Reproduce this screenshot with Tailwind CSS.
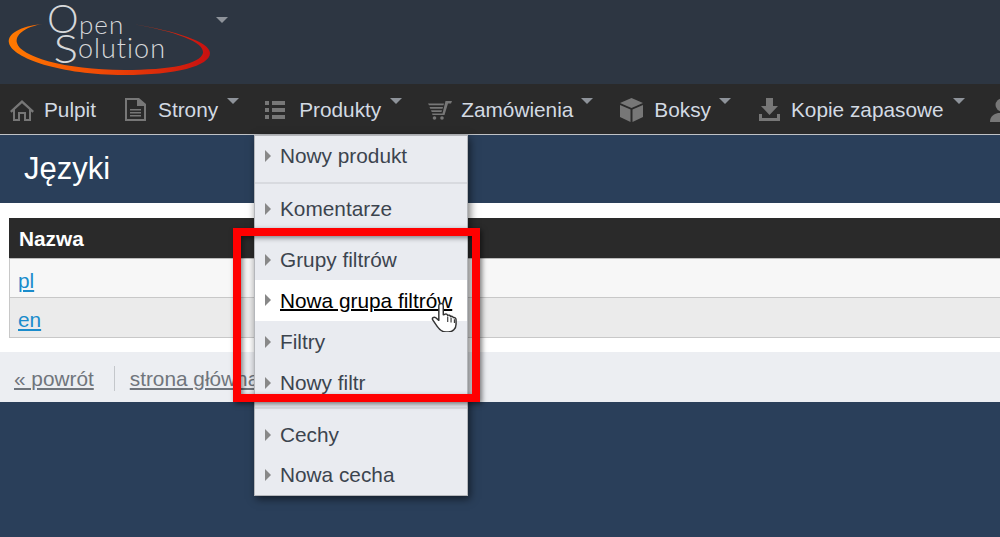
<!DOCTYPE html>
<html lang="pl">
<head>
<meta charset="utf-8">
<script src="https://cdn.jsdelivr.net/npm/@tailwindcss/browser@4"></script>
<title>Języki</title>
</head>
<body class="w-[1000px] h-[537px] overflow-hidden bg-[#2a3f5a] font-['Liberation_Sans',Arial,sans-serif] text-[20.8px] relative">

<header class="h-[84px] bg-[#2d3642] relative">
  <svg class="absolute left-[6px] top-[20px]" width="208" height="58" viewBox="0 0 208 58" fill="none">
    <defs><linearGradient id="g" x1="0" x2="1" y1="0" y2="0"><stop offset="0" stop-color="#ff7a00"/><stop offset=".45" stop-color="#f04a05"/><stop offset="1" stop-color="#c81010"/></linearGradient></defs>
    <path d="M37 4C14 6 1 14 3 23C6 38 55 55 118 55C170 55 204 46 204 33C204 22 170 11 126 4C168 11 199 22 197 33C194 44 165 50 118 50C58 50 14 36 11 23C9 15 18 7 37 4Z" fill="url(#g)"/>
  </svg>
  <span class="absolute left-[47px] top-[1px] text-[40px] leading-[34px] font-['Lato'] font-light text-[#d6d8da]">O</span>
  <span class="absolute left-[79px] top-[9px] text-[26px] leading-[30px] tracking-[1px] font-['Lato'] font-light text-[#d6d8da]">pen</span>
  <span class="absolute left-[55px] top-[28px] text-[40px] leading-[40px] scale-x-[1.15] font-['Lato'] font-light text-[#d6d8da]">S</span>
  <span class="absolute left-[78px] top-[33px] text-[27px] leading-[30px] tracking-[1px] font-['Lato'] font-light text-[#d6d8da]">olution</span>
  <span class="absolute left-[216px] top-[17px] w-0 h-0 border-x-[6px] border-x-transparent border-t-[6px] border-t-[#8e939a]"></span>
</header>

<nav class="h-[51px] bg-[#2a2a2a] border-b border-b-[#bfc2c6] flex items-center pl-[10px] text-[#d3dae3] whitespace-nowrap overflow-hidden pt-[1px]">
  <div class="flex items-center shrink-0">
    <span class="w-[34px] shrink-0"><svg width="24" height="22" viewBox="0 0 24 22" fill="#777"><path d="M12 1L0 12l1.600 1.700L3 12.400V22h7v-7h4v7h7v-9.600l1.400 1.300L24 12 12 1zM19 20h-3v-7H8v7H5V10.600l7-6.400 7 6.400V20z"/></svg></span>
    <span>Pulpit</span>
  </div>
  <div class="flex items-center ml-[29px] shrink-0">
    <span class="w-[33px] shrink-0"><svg width="21" height="23" viewBox="0 0 21 23" fill="#777"><path d="M0 0h14l7 6v17H0V0zm2 2v19h17V8h-7V2H2zm3 9h11v1.600H5V11zm0 3h11v1.600H5V14zm0 3h11v1.600H5V17z"/></svg></span>
    <span>Strony</span>
    <span class="ml-[9px] mb-[18px] w-0 h-0 border-x-[6px] border-x-transparent border-t-[6px] border-t-[#8e939a]"></span>
  </div>
  <div class="flex items-center ml-[26px] shrink-0">
    <span class="w-[34px] shrink-0"><svg width="20" height="20" viewBox="0 0 20 20" fill="#777"><path d="M0 1h4v4H0zM7 1h13v4H7zM0 8h4v4H0zM7 8h13v4H7zM0 15h4v4H0zM7 15h13v4H7z"/></svg></span>
    <span>Produkty</span>
    <span class="ml-[9px] mb-[18px] w-0 h-0 border-x-[6px] border-x-transparent border-t-[6px] border-t-[#8e939a]"></span>
  </div>
  <div class="flex items-center ml-[26px] shrink-0">
    <span class="w-[33px] shrink-0"><svg width="24" height="20" viewBox="0 0 24 20" fill="#777"><path d="M24 1l-1 2.500h-3L16.500 15H4.500L4 13.500h10.500L17.500 1H24zM0 3.500h16l-.5 1.800H1L0 3.500zM1.500 7h13.500l-.5 1.800H2.300L1.500 7zM3 10.300h11l-.5 1.700H3.700L3 10.300z"/><circle cx="6.500" cy="18" r="1.800"/><circle cx="14" cy="18" r="1.800"/></svg></span>
    <span>Zamówienia</span>
    <span class="ml-[8px] mb-[18px] w-0 h-0 border-x-[6px] border-x-transparent border-t-[6px] border-t-[#8e939a]"></span>
  </div>
  <div class="flex items-center ml-[27px] shrink-0">
    <span class="w-[34px] shrink-0"><svg width="23" height="24" viewBox="0 0 23 24" fill="#777"><path d="M11.500 0L23 5l-11.500 5L0 5 11.500 0zM0 7l10.500 4.600V24L0 19V7zM23 7v12l-10.500 5V11.600L23 7z"/></svg></span>
    <span>Boksy</span>
    <span class="ml-[8px] mb-[18px] w-0 h-0 border-x-[6px] border-x-transparent border-t-[6px] border-t-[#8e939a]"></span>
  </div>
  <div class="flex items-center ml-[28px] shrink-0">
    <span class="w-[32px] shrink-0"><svg width="21" height="23" viewBox="0 0 21 23" fill="#777"><path d="M7 0h7v8h5l-8.500 9L2 8h5V0zM0 16h3v4h15v-4h3v7H0v-7z"/></svg></span>
    <span>Kopie zapasowe</span>
    <span class="ml-[9px] mb-[18px] w-0 h-0 border-x-[6px] border-x-transparent border-t-[6px] border-t-[#8e939a]"></span>
  </div>
  <div class="ml-[25px] shrink-0">
    <svg width="24" height="24" viewBox="0 0 24 24" fill="#777"><circle cx="12" cy="7" r="6.500"/><path d="M0 24c0-6 4-8 8-9h8c4 1 8 3 8 9H0z"/></svg>
  </div>
</nav>

<section class="h-[68px] bg-[#2a3f5a] flex items-center pl-[24px] text-[31px] text-white">
  <h1>Języki</h1>
</section>

<main class="bg-white h-[149px] pt-[15px] pl-[9px]">
  <div class="h-[41px] bg-[#2a2a2a] text-white font-bold flex items-center pl-[10px] pt-[1px] border-b border-b-[#bbb]">Nazwa</div>
  <div class="h-[39px] bg-[#f7f7f7] border-l border-b border-[#c8c8c8] flex items-center pl-[8px] pt-[5px] text-[#1a8ccc]"><a class="underline" href="#">pl</a></div>
  <div class="h-[40px] bg-[#ebebeb] border-l border-b border-[#c8c8c8] flex items-center pl-[8px] pt-[5px] text-[#1a8ccc]"><a class="underline" href="#">en</a></div>
</main>

<footer class="h-[50px] bg-[#eceef2] flex items-center pl-[14px] pt-[3px] text-[#70757c]">
  <a class="underline pr-[20px] border-r border-r-[#c4c7cb] leading-[25px]" href="#">« powrót</a>
  <a class="underline ml-[15px]" href="#">strona główna</a>
</footer>

<div class="absolute left-[254px] top-[135px] w-[214px] h-[361px] bg-[#e9ebf0] border border-[#b5b7bb] text-[#3c444e] shadow-[2px_3px_8px_rgba(0,0,0,0.55)] flex flex-col">
  <div class="h-[46px] flex items-center gap-[9px] pl-[10px] pb-[6px] shrink-0"><span class="w-0 h-0 border-y-[6px] border-y-transparent border-l-[6px] border-l-[#888]"></span><span>Nowy produkt</span></div>
  <div class="h-[2px] bg-[#d8dadf] shrink-0"></div>
  <div class="h-[49px] flex items-center gap-[9px] pl-[10px] shrink-0"><span class="w-0 h-0 border-y-[6px] border-y-transparent border-l-[6px] border-l-[#888]"></span><span>Komentarze</span></div>
  <div class="h-[2px] bg-[#d8dadf] shrink-0"></div>
  <div class="h-[41px] flex items-center gap-[9px] pl-[10px] shrink-0 mt-[4px]"><span class="w-0 h-0 border-y-[6px] border-y-transparent border-l-[6px] border-l-[#888]"></span><span>Grupy filtrów</span></div>
  <div class="h-[41px] flex items-center gap-[9px] pl-[10px] shrink-0 bg-white text-black"><span class="w-0 h-0 border-y-[6px] border-y-transparent border-l-[6px] border-l-[#888] mb-[2px]"></span><a class="underline decoration-2" href="#">Nowa grupa filtrów</a></div>
  <div class="h-[41px] flex items-center gap-[9px] pl-[10px] shrink-0"><span class="w-0 h-0 border-y-[6px] border-y-transparent border-l-[6px] border-l-[#888]"></span><span>Filtry</span></div>
  <div class="h-[41px] flex items-center gap-[9px] pl-[10px] shrink-0"><span class="w-0 h-0 border-y-[6px] border-y-transparent border-l-[6px] border-l-[#888]"></span><span>Nowy filtr</span></div>
  <div class="h-[2px] bg-[#d8dadf] shrink-0 mt-[4px]"></div>
  <div class="h-[41px] flex items-center gap-[9px] pl-[10px] shrink-0 mt-[5px]"><span class="w-0 h-0 border-y-[6px] border-y-transparent border-l-[6px] border-l-[#888]"></span><span>Cechy</span></div>
  <div class="h-[41px] flex items-center gap-[9px] pl-[10px] shrink-0 -mt-[1px]"><span class="w-0 h-0 border-y-[6px] border-y-transparent border-l-[6px] border-l-[#888]"></span><span>Nowa cecha</span></div>
</div>

<div class="absolute left-[233px] top-[228px] w-[247px] h-[174px] border-[8px] border-[#ff0000] shadow-[2px_2px_5px_rgba(0,0,0,0.5),inset_2px_2px_5px_rgba(0,0,0,0.45)]"></div>

<svg class="absolute left-[431px] top-[302px]" width="29" height="30" viewBox="0 0 25 27">
  <path d="M7 2c1.500-1.500 3.500-.5 3.500 1.500v8l1.500-.5c1-.5 2 0 2.500 1 1-.5 2 0 2.500 1 1-.5 2.200 0 2.500 1 1.500-.3 2.500.7 2.500 2v4c0 4-3 7-7 7h-2c-4 0-6-2-8-5l-4-6c-1-1.500 1-3 2.500-2l3 2.500V3.500c0-.7.200-1.200.5-1.500z" fill="#fff" stroke="#333" stroke-width="1.300" stroke-linejoin="round"/>
  <path d="M14.500 13v5M17.500 14v4.500M20.500 15.500v3.500" stroke="#333" stroke-width="1" fill="none"/>
</svg>
</body>
</html>
